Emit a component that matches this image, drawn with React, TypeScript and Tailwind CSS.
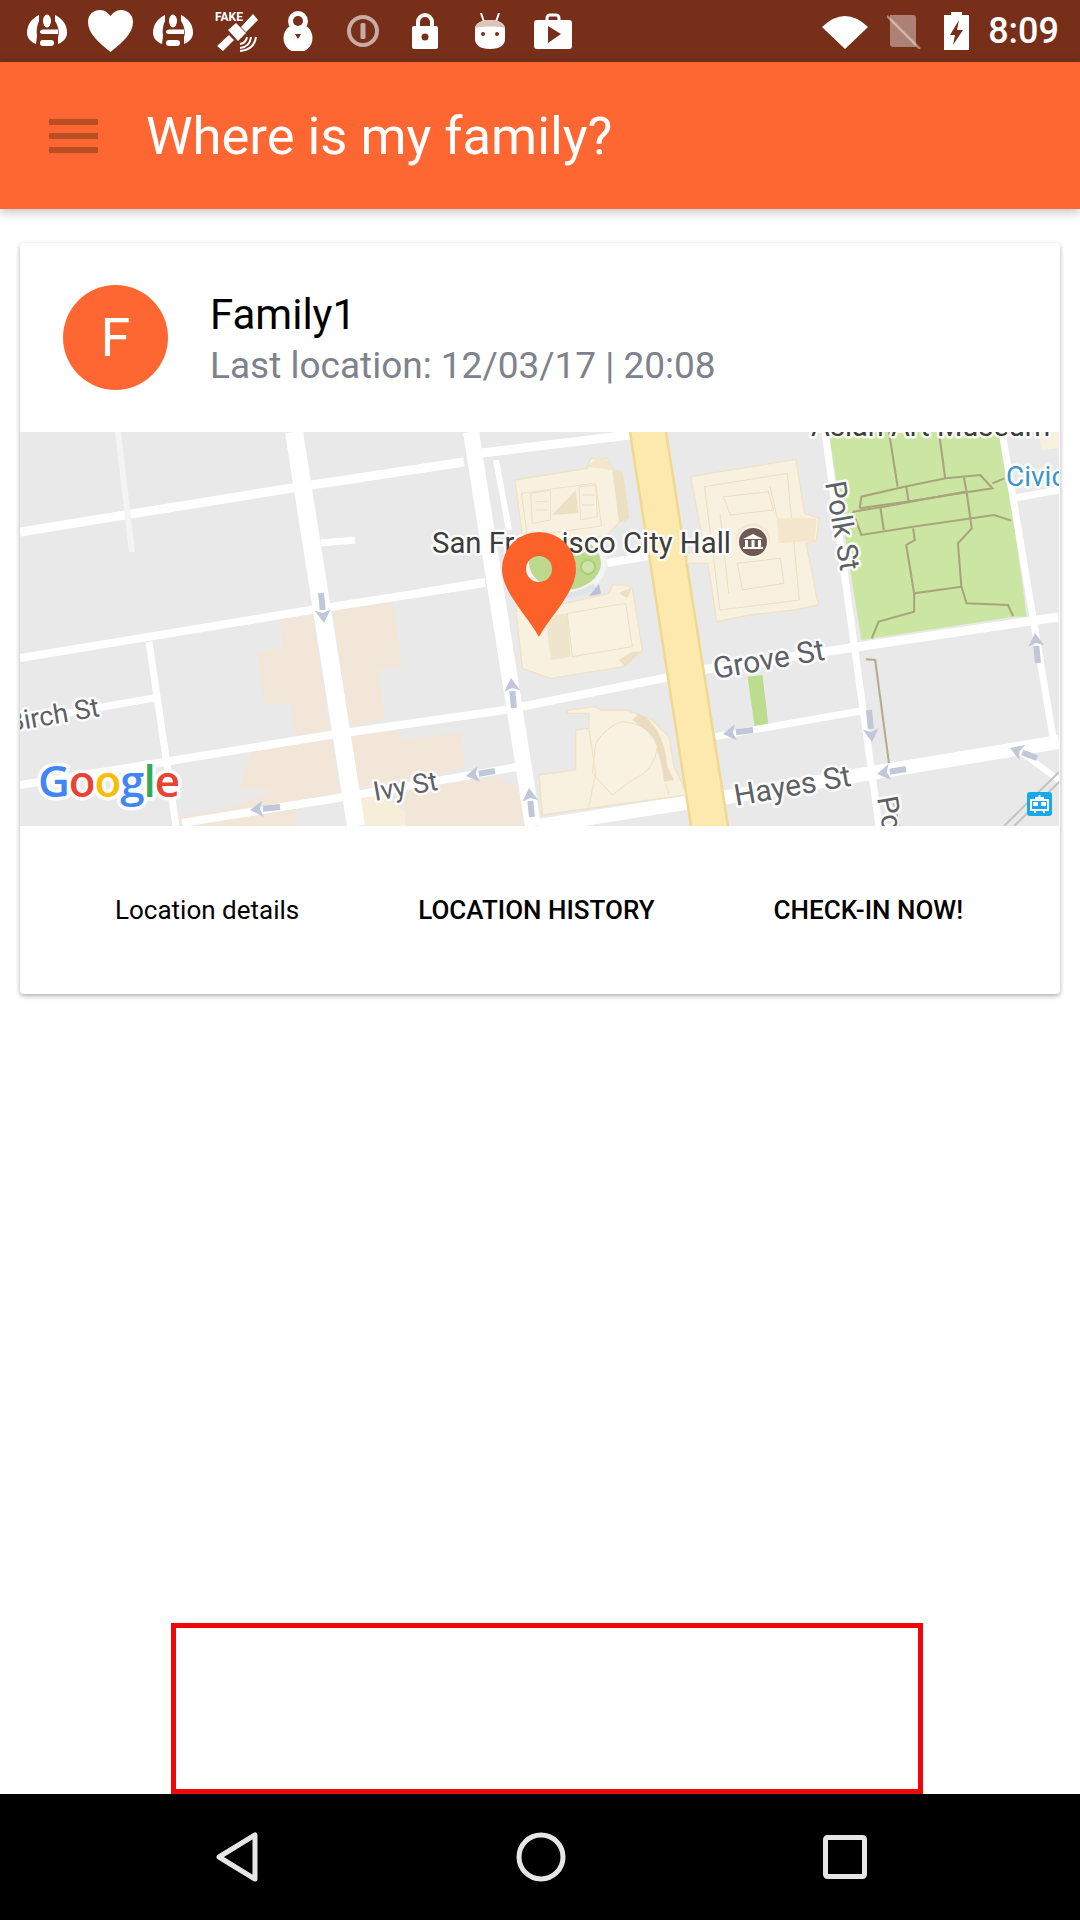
import React from "react";

const DARK = "#772f1a";

type Road = [string, number, string?];

const roads: Road[] = [
  ["21,532 293,488 465,462", 9],
  ["483,453 631,435", 9],
  ["21,658 312,610 486,583", 8],
  ["420,593 486,582", 8],
  ["608,563 650,556", 8],
  ["21,722 103,707 155,698", 7],
  ["119,432 133,552", 6, "#f4f4f4"],
  ["150,642 177,826", 7],
  ["322,543 356,540", 7],
  ["295,432 357,826", 18],
  ["472,432 534,826", 16],
  ["497,460 510,530", 6],
  ["21,785 165,762 331,735 506,710 670,677", 8],
  ["702,670 1059,617", 9],
  ["183,823 345,797 518,767", 8],
  ["540,826 692,802", 14],
  ["722,798 1060,742", 14],
  ["714,737 867,710", 7],
  ["826,432 880,826", 7],
  ["1003,432 1054,737", 7],
  ["1016,498 1060,490", 7],
  ["1023,753 1060,780", 6],
];

const arrows: [number, number, number, number][] = [
  [322, 593, 325, 623],
  [515, 708, 512, 678],
  [281, 807, 251, 810],
  [496, 771, 467, 776],
  [533, 817, 530, 788],
  [754, 730, 724, 734],
  [870, 710, 873, 742],
  [907, 769, 878, 774],
  [1039, 663, 1036, 633],
  [1038, 758, 1011, 748],
];

function Arrow({ a }: { a: [number, number, number, number] }) {
  const [x1, y1, x2, y2] = a;
  const len = Math.hypot(x2 - x1, y2 - y1);
  const ux = (x2 - x1) / len;
  const uy = (y2 - y1) / len;
  const bx = x2 - ux * 13;
  const by = y2 - uy * 13;
  return (
    <g>
      <line x1={x1} y1={y1} x2={bx} y2={by} stroke="#c0c7d8" strokeWidth={6} />
      <polygon
        points={`${x2},${y2} ${bx - uy * 8},${by + ux * 8} ${x2 - ux * 10},${y2 - uy * 10} ${bx + uy * 8},${by - ux * 8}`}
        fill="#c0c7d8"
      />
    </g>
  );
}

function Label({
  x,
  y,
  r = 0,
  size = 30,
  fill = "#5d6066",
  children,
}: {
  x: number;
  y: number;
  r?: number;
  size?: number;
  fill?: string;
  children: React.ReactNode;
}) {
  return (
    <text
      x={x}
      y={y}
      transform={r ? `rotate(${r} ${x} ${y})` : undefined}
      fontSize={size}
      fill={fill}
      stroke="#ffffff"
      strokeOpacity={0.9}
      strokeWidth={5}
      paintOrder="stroke"
      strokeLinejoin="round"
      fontFamily="Roboto, sans-serif"
    >
      {children}
    </text>
  );
}

function MapView() {
  const b = "#f9f1df";
  const e = "#efe3c7";
  const d = "#ebdfc4";
  return (
    <svg viewBox="21 432 1039 394" width={1039} height={394} className="block">
      <rect x={21} y={432} width={1039} height={394} fill="#e9e9ea" />

      {/* block areas */}
      <g transform="translate(0 420) scale(0.3444 0.3333)" fill="#f1e6d8">
        <polygon points="815,600 910,585 960,940 860,945 845,850 770,850 750,695 825,685" />
        <polygon points="970,570 1145,545 1170,740 1100,750 1120,900 1015,920" />
        <polygon points="735,990 965,958 990,1120 860,1170 860,1218 530,1218 525,1185 650,1170 800,1110 695,1110" />
        <polygon points="1020,950 1160,930 1165,960 1340,935 1355,1045 1270,1060 1040,1105" />
        <polygon points="1180,1218 1170,1110 1450,1070 1520,1110 1520,1218" />
        <polygon points="1045,1130 1115,1125 1180,1175 1180,1218 1055,1218" fill="#f6eed8" />
      </g>

      {/* park */}
      <g transform="translate(540 420) scale(0.3448 0.3333)">
        <polygon points="840,36 1340,36 1415,590 1380,590 935,660" fill="#cbe6a3" />
        <g fill="none" stroke="#a9a47c" strokeWidth={6}>
          <path d="M1015,36 L1040,200" />
          <path d="M1160,36 L1178,175" />
          <path d="M930,265 L935,230 L1060,200 L1180,175 L1280,165 L1315,205 L1065,245 L930,265" />
          <path d="M1065,200 L1072,245 M1232,172 L1240,215 M1315,190 L1350,175" />
          <path d="M910,275 L1000,260 L1235,215 M910,275 L935,345 L1085,320 L1320,285 L1370,302" />
          <path d="M990,262 L1000,330" />
          <path d="M1240,215 L1255,325 L1215,370 L1225,500 L1240,550 L1360,555 L1375,588" />
          <path d="M1085,325 L1090,360 L1065,375 L1088,520 L1225,500" />
          <path d="M1088,520 L1088,575 L985,605 L965,655" />
        </g>
        <polygon points="605,770 648,765 665,912 625,918" fill="#bcdd8d" />
        <path d="M948,718 L975,720 L1015,1030 M1025,1130 L1045,1218" fill="none" stroke="#b3ad8c" strokeWidth={6} />
      </g>

      {roads.map(([pts, w, c], i) => (
        <polyline key={i} points={pts} fill="none" stroke={c ?? "#ffffff"} strokeWidth={w} />
      ))}

      {/* corner rail */}
      <path d="M1005,826 L1060,772 M1015,826 L1060,782" stroke="#c4c4c4" strokeWidth={2} fill="none" />

      {/* boulevard */}
      <polygon points="631,432 667,432 729,826 692,826" fill="#fde9ae" />
      <path d="M631,432 L692,826 M667,432 L729,826" stroke="#efd88f" strokeWidth={2.5} fill="none" />

      {/* plaza */}
      <ellipse cx={566} cy={563} rx={42} ry={33} fill="#f3f4f6" />
      <path d="M530,590 Q566,604 596,586" fill="none" stroke="#dfe3ea" strokeWidth={6} />
      <ellipse cx={566} cy={563} rx={36} ry={27} fill="#bcd98e" />
      <circle cx={589} cy={567} r={7} fill="#cfe4aa" stroke="#a8cf7c" strokeWidth={2} />
      <polygon points="590,596 600,584 602,594" fill="#bac3d6" />

      {/* north-west building */}
      <g transform="translate(420 430) scale(0.3333)">
        <polygon points="288,150 505,115 515,85 565,85 580,118 610,125 630,265 600,278 565,315 500,330 310,320" fill={b} stroke={e} strokeWidth={4} />
        <polygon points="580,120 610,125 630,265 600,278" fill={d} />
        <polygon points="505,110 540,78 570,95 580,120" fill="#f2e6cc" />
        <g fill="none" stroke={d} strokeWidth={3}>
          <rect x={315} y={175} width={225} height={130} transform="rotate(-8 420 240)" />
          <path d="M335,190 L395,180 L395,270 L340,280 Z M480,170 L530,165 L535,260 L485,270 Z" />
          <path d="M350,215 H385 M350,240 H385 M490,195 H525 M490,225 H525" />
        </g>
        <polygon points="400,255 470,180 478,250" fill={d} />
        {/* south-west building */}
        <polygon points="290,530 440,520 570,490 580,465 620,465 640,475 670,660 615,710 395,745 310,715" fill={b} stroke={e} strokeWidth={4} />
        <polygon points="380,560 445,550 455,680 395,690" fill="#efe5cc" />
        <path d="M445,550 L620,520 L640,650 L460,680 Z" fill="#f9f2e0" stroke={d} strokeWidth={3} />
        <polygon points="600,490 640,470 625,505" fill={d} />
        <polygon points="600,690 640,665 660,665 620,710" fill={d} />
      </g>

      {/* north-east building */}
      <g transform="translate(540 420) scale(0.3448 0.3333)">
        <polygon points="440,170 745,118 770,280 812,295 805,360 775,370 810,555 740,570 610,585 515,605 490,430 430,430 430,400 480,390" fill={b} stroke={e} strokeWidth={4} />
        <g fill="none" stroke={d} strokeWidth={3}>
          <path d="M480,200 L720,160 L755,540 L525,570 Z" />
          <path d="M535,230 L665,215 L680,270 L555,285 Z" />
          <path d="M575,430 L700,415 L710,490 L590,510 Z" />
          <path d="M670,200 L705,355 M525,280 L550,520" />
        </g>
        <polygon points="690,295 805,295 800,362 695,370" fill="#f3e6cc" />
        <circle cx={620} cy={360} r={50} fill="#f2e7cf" />
      </g>

      {/* south building */}
      <g transform="translate(420 660) scale(0.3333)">
        <polygon points="360,345 470,330 470,210 510,205 510,160 445,160 445,150 530,140 545,150 620,150 700,180 750,230 765,320 790,370 800,405 370,465" fill={b} stroke={e} strokeWidth={4} />
        <path d="M660,160 Q735,200 745,320 L765,360 L735,365 Q725,240 640,180 Z" fill="#ebdcbf" />
        <path d="M530,250 Q560,200 610,185 Q690,190 715,260 Q710,330 640,360 L580,405 L520,340 Z" fill="#faf2e0" stroke={d} strokeWidth={3} />
        <path d="M510,210 L530,340 L510,440 M370,465 L360,345 M740,370 L750,405" fill="none" stroke={e} strokeWidth={4} />
      </g>

      {/* top right fragment */}
      <polygon points="1040,432 1060,432 1060,448 1042,450" fill={b} />

      {arrows.map((a, i) => (
        <Arrow key={i} a={a} />
      ))}

      <Label x={433} y={553} size={29.3} fill="#3c3c3c">San Francisco City Hall</Label>
      <Label x={812} y={436} size={29} fill="#3c3c3c">Asian Art Museum</Label>
      <Label x={1007} y={486} size={28} fill="#3b96c8">Civic</Label>
      <Label x={716} y={679} r={-10}>Grove St</Label>
      <Label x={737} y={806} r={-10}>Hayes St</Label>
      <Label x={376} y={801} r={-10} size={27}>Ivy St</Label>
      <Label x={10} y={732} r={-10} size={27}>Birch St</Label>
      <Label x={826} y={483} r={80} size={29}>Polk St</Label>
      <Label x={878} y={798} r={80} size={29}>Polk St</Label>

      {/* museum badge */}
      <circle cx={754} cy={542} r={16} fill="#ffffff" fillOpacity={0.6} />
      <circle cx={754} cy={542} r={14} fill="#6e5a52" />
      <path d="M744,539 L754,534 L764,539 Z M744,547 H764 V549 H744 Z" fill="#ffffff" />
      <rect x={746} y={540} width={3} height={7} fill="#ffffff" />
      <rect x={752.5} y={540} width={3} height={7} fill="#ffffff" />
      <rect x={759} y={540} width={3} height={7} fill="#ffffff" />

      {/* transit badge */}
      <rect x={1028} y={792} width={25} height={24} rx={3} fill="#18a8ec" />
      <path d="M1040.5,795 V798 M1036,798 H1045 M1032,800 H1049 V810 H1032 Z M1035,812 H1037 M1044,812 H1046" stroke="#ffffff" strokeWidth={2} fill="none" />
      <rect x={1034} y={802} width={5} height={4} fill="#ffffff" />
      <rect x={1042} y={802} width={5} height={4} fill="#ffffff" />

      {/* Google logo */}
      <text
        x={39}
        y={797}
        fontSize={44}
        fontWeight={600}
        fontFamily="'Open Sans', sans-serif"
        stroke="#ffffff"
        strokeOpacity={0.9}
        strokeWidth={7}
        paintOrder="stroke"
        strokeLinejoin="round"
        textLength={142}
      >
        <tspan fill="#4285f4">G</tspan>
        <tspan fill="#ea4335">o</tspan>
        <tspan fill="#fbbc05">o</tspan>
        <tspan fill="#4285f4">g</tspan>
        <tspan fill="#34a853">l</tspan>
        <tspan fill="#ea4335">e</tspan>
      </text>

      {/* pin */}
      <path
        fillRule="evenodd"
        fill="#fb6129"
        d="M540,637 C528,615 503,592 503,569 A37,37 0 0 1 577,569 C577,592 552,615 540,637 Z M540,556 A13,13 0 1 0 540,582 A13,13 0 1 0 540,556 Z"
      />
    </svg>
  );
}

function Horn() {
  return (
    <svg width={40} height={36} viewBox="0 0 40 36">
      <path d="M12,2 C4,6 0,12 0,20 C0,25 4,29 9,31 L10,23 C9,18 10,12 12,8 Z" fill="#fff" />
      <path d="M28,2 C36,6 40,12 40,20 C40,25 36,29 31,31 L31,24 C33,20 31,12 28,8 Z" fill="#fff" />
      <ellipse cx={20} cy={8} rx={4} ry={6.5} fill="#fff" />
      <path d="M13,19 Q13,16.5 16,16.5 H31 V21 H17 Q13,21 13,19 Z" fill="#fff" />
      <rect x={13} y={27} width={14} height={6} rx={3} fill="#fff" />
    </svg>
  );
}

function StatusBar() {
  return (
    <div className="h-[62px] bg-[#772f1a] flex items-center shrink-0">
      <div className="ml-[27px]">
        <Horn />
      </div>
      <svg className="ml-[21px]" width={45} height={42} viewBox="0 0 45 42">
        <path d="M22.5,42 C10,32 0,23 0,12 C0,4 6,0 12,0 C17,0 20,3 22.5,6 C25,3 28,0 33,0 C39,0 45,4 45,12 C45,23 35,32 22.5,42 Z" fill="#fff" />
      </svg>
      <div className="ml-[20px]">
        <Horn />
      </div>
      <svg className="ml-[22px]" width={44} height={42} viewBox="0 0 44 42">
        <text x={0} y={11} fontSize={12} fontWeight={700} fill="#fff" fontFamily="Roboto, sans-serif">FAKE</text>
        <path d="M2,36 L14,25 L19,30 L8,41 Z M26,17 L38,4 L43,10 L31,22 Z" fill="#fff" />
        <path d="M13,20 L21,13 L31,23 L23,31 Z" fill="#fff" />
        <path d="M25,38 Q35,37 36,27 M25,34 Q31,33 32,27 M25,41 Q39,40 41,27" stroke="#fff" strokeWidth={2} fill="none" />
      </svg>
      <svg className="ml-[24px]" width={30} height={40} viewBox="0 0 30 40">
        <circle cx={15} cy={27} r={14.5} fill="#fff" />
        <circle cx={15} cy={10} r={10} fill="#fff" />
        <circle cx={15} cy={10} r={5} fill={DARK} />
        <path d="M12,23 L15,28 L18,23 Z" fill={DARK} />
      </svg>
      <svg className="ml-[34px]" width={32} height={32} viewBox="0 0 32 32">
        <circle cx={16} cy={16} r={14} stroke="#fff" strokeOpacity={0.6} strokeWidth={4} fill="none" />
        <rect x={13.5} y={8} width={5} height={16} rx={1.5} fill="#fff" fillOpacity={0.6} />
      </svg>
      <svg className="ml-[33px]" width={26} height={36} viewBox="0 0 26 36">
        <path d="M6,14 V9 A7,7 0 0 1 20,9 V14" stroke="#fff" strokeWidth={4} fill="none" />
        <rect x={0} y={13} width={26} height={23} rx={2} fill="#fff" />
        <circle cx={13} cy={24} r={3.5} fill={DARK} />
      </svg>
      <svg className="ml-[36px]" width={32} height={36} viewBox="0 0 32 36">
        <path d="M7,0 L10,9 M25,0 L22,9" stroke="#fff" strokeWidth={2} />
        <path d="M1,16 C1,10 8,7 16,7 C24,7 31,10 31,16 V26 C31,32 26,36 16,36 C6,36 1,32 1,26 Z" fill="#fff" />
        <path d="M1,15 C2,10 8,7 16,7 C24,7 30,10 31,15 C24,13 8,13 1,15 Z" fill="#dcc3bb" />
        <circle cx={9} cy={21} r={2} fill={DARK} />
        <circle cx={23} cy={21} r={2} fill={DARK} />
      </svg>
      <svg className="ml-[28px]" width={38} height={36} viewBox="0 0 38 36">
        <path d="M13,8 V5 A3,3 0 0 1 16,2 H22 A3,3 0 0 1 25,5 V8" stroke="#fff" strokeWidth={3} fill="none" />
        <rect x={0} y={7} width={38} height={29} rx={3} fill="#fff" />
        <path d="M14,13 L27,21 L14,30 Z" fill={DARK} />
      </svg>

      <div className="ml-auto flex items-center">
        <svg width={46} height={36} viewBox="0 0 46 36">
          <path d="M0,14 Q23,-8 46,14 L23,36 Z" fill="#fff" />
        </svg>
        <svg className="ml-[19px]" width={34} height={36} viewBox="0 0 34 36">
          <path d="M3,2 H26 A3,3 0 0 1 29,5 V34 H6 A3,3 0 0 1 3,31 Z" fill="#fff" fillOpacity={0.4} />
          <path d="M0,3 L33,36" stroke="#fff" strokeOpacity={0.4} strokeWidth={2.5} />
        </svg>
        <svg className="ml-[23px]" width={25} height={38} viewBox="0 0 25 38">
          <rect x={7} y={0} width={11} height={4} fill="#fff" />
          <rect x={0} y={3} width={25} height={35} fill="#fff" />
          <path d="M15,8 L6,23 H11 L9,33 L19,18 H13 Z" fill={DARK} />
        </svg>
        <span className="ml-[19px] mr-[21px] text-[36px] leading-none text-white font-[Roboto,sans-serif] font-medium">8:09</span>
      </div>
    </div>
  );
}

function Header() {
  return (
    <div className="h-[147px] bg-[#fe6732] flex items-center shrink-0 shadow-[0_3px_10px_rgba(0,0,0,0.25)] relative z-10">
      <div className="ml-[49px] w-[49px] flex flex-col gap-[8px]">
        <div className="h-[6px] bg-[#b84e21]" />
        <div className="h-[6px] bg-[#b84e21]" />
        <div className="h-[6px] bg-[#b84e21]" />
      </div>
      <h1 className="ml-[48px] pt-[2px] text-[52.5px] leading-none font-normal text-white">Where is my family?</h1>
    </div>
  );
}

function Card() {
  return (
    <div className="h-[751px] bg-white rounded-[4px] flex flex-col overflow-hidden shadow-[0_2px_5px_rgba(0,0,0,0.32)]">
      <div className="h-[189px] flex items-center shrink-0">
        <div className="ml-[43px] w-[105px] h-[105px] rounded-full bg-[#fe6732] flex items-center justify-center text-white text-[54px] leading-none">F</div>
        <div className="ml-[42px] pt-[4px] flex flex-col">
          <div className="text-[42px] leading-[52px] text-black">Family1</div>
          <div className="text-[37px] leading-[50px] text-[#7e828d]">Last location: 12/03/17 | 20:08</div>
        </div>
      </div>
      <MapView />
      <div className="flex-1 flex items-center pl-[95px] gap-[119px] text-[26px] leading-none text-black">
        <span>Location details</span>
        <span className="font-medium">LOCATION HISTORY</span>
        <span className="font-medium">CHECK-IN NOW!</span>
      </div>
    </div>
  );
}

function NavBar() {
  return (
    <div className="h-[126px] bg-black flex items-center shrink-0 relative">
      <svg className="ml-[216px]" width={42} height={50} viewBox="0 0 42 50">
        <path d="M39,3 V47 L3,25 Z" fill="none" stroke="#e6e6e6" strokeWidth={5} strokeLinejoin="round" />
      </svg>
      <svg className="ml-[258px]" width={50} height={50} viewBox="0 0 50 50">
        <circle cx={25} cy={25} r={22} fill="none" stroke="#e6e6e6" strokeWidth={5} />
      </svg>
      <svg className="ml-[257px]" width={44} height={44} viewBox="0 0 44 44">
        <rect x={2.5} y={2.5} width={39} height={39} rx={2} fill="none" stroke="#e6e6e6" strokeWidth={5} />
      </svg>
    </div>
  );
}

export default function App() {
  return (
    <div className="w-[1080px] h-[1920px] bg-white flex flex-col overflow-hidden font-[Roboto,sans-serif]">
      <StatusBar />
      <Header />
      <main className="flex-1 flex flex-col px-[20px] pt-[34px]">
        <Card />
        <div className="mt-auto ml-[151px] w-[752px] h-[171px] border-[5px] border-[#ef0808]" />
      </main>
      <NavBar />
    </div>
  );
}
